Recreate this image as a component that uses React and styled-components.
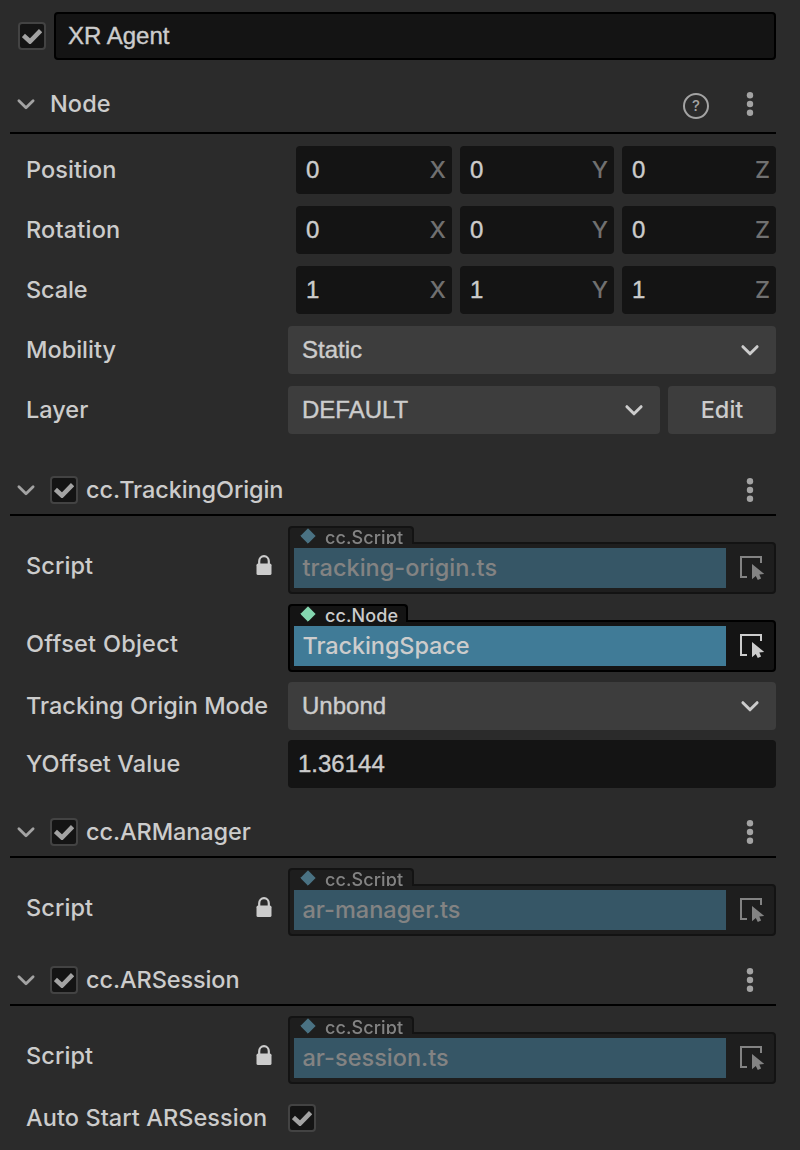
import React from "react";
import styled, { createGlobalStyle } from "styled-components";

const GlobalStyle = createGlobalStyle`
  *, *::before, *::after { box-sizing: border-box; }
  body {
    margin: 0;
    background: #2b2b2b;
    color: #cccccc;
    font-family: Inter, "Liberation Sans", sans-serif;
    font-size: 23.5px;
    font-weight: 450;
    line-height: 28px;
  }
`;

const Panel = styled.main`
  width: 800px;
  height: 1150px;
  padding: 12px 24px 0 10px;
  background: #2b2b2b;
  overflow: hidden;
`;

const Text = styled.span`
  letter-spacing: ${(p) => p.$track || 0}px;
  white-space: nowrap;
`;

const InputText = styled.span`
  font-family: "Liberation Sans", Arial, sans-serif;
  font-size: 24px;
  font-weight: 400;
  white-space: nowrap;
  -webkit-text-stroke: 0.4px currentColor;
`;

const TitleBar = styled.header`
  display: flex;
  align-items: center;
  gap: 8px;
  padding-left: 8px;
`;

const NameField = styled.div`
  flex: 1;
  height: 48px;
  padding: 8px 12px;
  border: 2px solid #000;
  border-radius: 4px;
  background: #141414;
`;

const CheckFrame = styled.span`
  display: flex;
  flex: none;
  align-items: center;
  justify-content: center;
  width: 28px;
  height: 28px;
  border: 2px solid #434343;
  border-radius: 4px;
  background: #141414;
`;

const SectionBlock = styled.section`
  margin-top: ${(p) => p.$gap}px;
`;

const SectionHeader = styled.div`
  display: flex;
  align-items: center;
  height: ${(p) => (p.$tall ? 54 : 50)}px;
  padding: 0 22px ${(p) => (p.$tall ? 4 : 0)}px 6px;
  border-bottom: 2px solid #000;
`;

const HeaderLabel = styled.div`
  display: flex;
  flex: 1;
  align-items: center;
  gap: 8px;
  margin-left: 14px;
`;

const HeaderTools = styled.div`
  display: flex;
  align-items: center;
  gap: 37px;
`;

const Rows = styled.div`
  display: flex;
  flex-direction: column;
  gap: ${(p) => p.$gap}px;
  padding: ${(p) => p.$gap}px 0 0 16px;
`;

const RowFrame = styled.div`
  display: grid;
  grid-template-columns: 262px 488px;
  align-items: center;
  min-height: 48px;
`;

const RowLabel = styled.div`
  display: flex;
  align-items: center;
  justify-content: space-between;
  padding: ${(p) => (p.$low ? 12 : 0)}px 16px 0 0;
`;

const VectorGrid = styled.div`
  display: grid;
  grid-template-columns: 156px 154px 154px;
  gap: 8px;
  padding-left: 8px;
`;

const NumberField = styled.div`
  display: flex;
  align-items: center;
  justify-content: space-between;
  height: 48px;
  padding: 0 6px 0 10px;
  border-radius: 4px;
  background: #141414;
`;

const Axis = styled.span`
  color: #707070;
`;

const SplitControl = styled.div`
  display: flex;
  gap: 8px;
`;

const SelectBox = styled.div`
  display: flex;
  flex: 1;
  align-items: center;
  justify-content: space-between;
  height: 48px;
  padding: 0 16px 0 14px;
  border-radius: 4px;
  background: #3d3d3d;
`;

const Button = styled.button`
  width: 108px;
  height: 48px;
  padding: 0;
  border: 0;
  border-radius: 4px;
  background: #3d3d3d;
  color: inherit;
  font: inherit;
`;

const Reference = styled.div`
  opacity: ${(p) => (p.$locked ? 0.55 : 1)};
`;

const TypeTab = styled.div`
  position: relative;
  display: flex;
  width: ${(p) => p.$width}px;
  height: 18px;
  margin-bottom: -2px;
  padding-left: 10px;
  gap: 9px;
  border: 2px solid #000;
  border-bottom: 0;
  border-radius: 4px 4px 0 0;
  background: #141414;
  overflow: hidden;
  font-size: 18px;
  line-height: 19px;
`;

const ReferenceBox = styled.div`
  display: flex;
  align-items: center;
  height: 52px;
  padding: 4px 10px 4px 4px;
  border: 2px solid #000;
  border-radius: 0 4px 4px 4px;
  background: #141414;
`;

const ReferenceValue = styled.div`
  width: 432px;
  height: 40px;
  margin-right: 14px;
  padding: 6px 8.5px;
  background: #407b97;
`;

const Chevron = ({ color = "#a3a3a3", width = 2.8 }) => (
  <svg width="20" height="14" viewBox="0 0 20 14" fill="none">
    <path d="M2.9 3.7 10 10.8l7.1-7.1" stroke={color} strokeWidth={width} strokeLinecap="round" strokeLinejoin="round" />
  </svg>
);

const Checkbox = () => (
  <CheckFrame role="checkbox" aria-checked="true">
    <svg width="20" height="16" viewBox="0 0 20 16" fill="none">
      <path d="m1.4 7.4 6.6 6.1L18.6 2.6" stroke="#a3a3a3" strokeWidth="4.6" />
    </svg>
  </CheckFrame>
);

const Kebab = () => (
  <svg width="8" height="26" viewBox="0 0 8 26" fill="#a3a3a3">
    <circle cx="4" cy="4.3" r="3.2" />
    <circle cx="4" cy="13" r="3.2" />
    <circle cx="4" cy="21.7" r="3.2" />
  </svg>
);

const HelpBadge = styled.span`
  display: flex;
  align-items: center;
  justify-content: center;
  width: 26px;
  height: 26px;
  margin-top: 4px;
  border: 2px solid #a3a3a3;
  border-radius: 50%;
  color: #a3a3a3;
  font-size: 15px;
  font-weight: 500;
  line-height: 22px;
`;

const Lock = () => (
  <svg width="16" height="22" viewBox="0 0 16 22">
    <path d="M3.2 9V6.2C3.2 3.4 5.2 1.2 8 1.2s4.8 2.2 4.8 5V9" fill="none" stroke="#ccc" strokeWidth="2.2" />
    <rect x="0.5" y="8.6" width="15" height="11.4" rx="1.6" fill="#ccc" />
  </svg>
);

const Diamond = ({ color }) => (
  <svg width="16" height="16" viewBox="0 0 16 16">
    <path d="M8 .8 15.2 8 8 15.2.8 8Z" fill={color} stroke={color} strokeLinejoin="round" />
  </svg>
);

const Picker = () => (
  <svg width="24" height="24" viewBox="0 0 24 24">
    <path d="M7 21H1V1h20v6" fill="none" stroke="#ccc" strokeWidth="2" />
    <path d="M12 8v15.2l3.8-3.2 2 4 3.3-1.5-1.8-4 4.8-.6Z" fill="#ccc" />
  </svg>
);

const Select = ({ children }) => (
  <SelectBox>
    <InputText>{children}</InputText>
    <Chevron color="#ccc" width={3} />
  </SelectBox>
);

const Section = ({ title, track = -0.1, gap = 20, rowGap = 10, node, children }) => (
  <SectionBlock $gap={gap}>
    <SectionHeader $tall={node}>
      <Chevron />
      <HeaderLabel>
        {!node && <Checkbox />}
        <Text $track={track}>{title}</Text>
      </HeaderLabel>
      <HeaderTools>
        {node && <HelpBadge>?</HelpBadge>}
        <Kebab />
      </HeaderTools>
    </SectionHeader>
    <Rows $gap={rowGap}>{children}</Rows>
  </SectionBlock>
);

const Row = ({ label, track, locked, low, children }) => (
  <RowFrame>
    <RowLabel $low={low}>
      <Text $track={track}>{label}</Text>
      {locked && <Lock />}
    </RowLabel>
    {children}
  </RowFrame>
);

const Vector = ({ value }) => (
  <VectorGrid>
    {["X", "Y", "Z"].map((axis) => (
      <NumberField key={axis}>
        <InputText>{value}</InputText>
        <Axis>{axis}</Axis>
      </NumberField>
    ))}
  </VectorGrid>
);

const ReferenceRow = ({ label, track, type, tabWidth, color, value, valueTrack, locked }) => (
  <Row label={label} track={track} locked={locked} low>
    <Reference $locked={locked}>
      <TypeTab $width={tabWidth}>
        <Diamond color={color} />
        <Text $track={0.1}>{type}</Text>
      </TypeTab>
      <ReferenceBox>
        <ReferenceValue>
          <Text $track={valueTrack}>{value}</Text>
        </ReferenceValue>
        <Picker />
      </ReferenceBox>
    </Reference>
  </Row>
);

const ScriptRow = ({ file }) => (
  <ReferenceRow
    label="Script"
    track={0.1}
    type="cc.Script"
    tabWidth={126}
    color="#64aecd"
    value={file}
    valueTrack={0.02}
    locked
  />
);

export default function App() {
  return (
    <>
      <GlobalStyle />
      <Panel>
        <TitleBar>
          <Checkbox />
          <NameField>
            <InputText>XR Agent</InputText>
          </NameField>
        </TitleBar>
        <Section title="Node" track={0.1} gap={20} rowGap={12} node>
          <Row label="Position" track={0.08}><Vector value="0" /></Row>
          <Row label="Rotation" track={0.2}><Vector value="0" /></Row>
          <Row label="Scale" track={-0.1}><Vector value="1" /></Row>
          <Row label="Mobility"><Select>Static</Select></Row>
          <Row label="Layer">
            <SplitControl>
              <Select>DEFAULT</Select>
              <Button>Edit</Button>
            </SplitControl>
          </Row>
        </Section>
        <Section title="cc.TrackingOrigin" gap={32}>
          <ScriptRow file="tracking-origin.ts" />
          <ReferenceRow
            label="Offset Object"
            track={0.25}
            type="cc.Node"
            tabWidth={120}
            color="#85d7b0"
            value="TrackingSpace"
            valueTrack={-0.1}
          />
          <Row label="Tracking Origin Mode"><Select>Unbond</Select></Row>
          <Row label="YOffset Value" track={0.08}>
            <NumberField><InputText>1.36144</InputText></NumberField>
          </Row>
        </Section>
        <Section title="cc.ARManager">
          <ScriptRow file="ar-manager.ts" />
        </Section>
        <Section title="cc.ARSession">
          <ScriptRow file="ar-session.ts" />
          <Row label="Auto Start ARSession" track={0.07}><Checkbox /></Row>
        </Section>
      </Panel>
    </>
  );
}
